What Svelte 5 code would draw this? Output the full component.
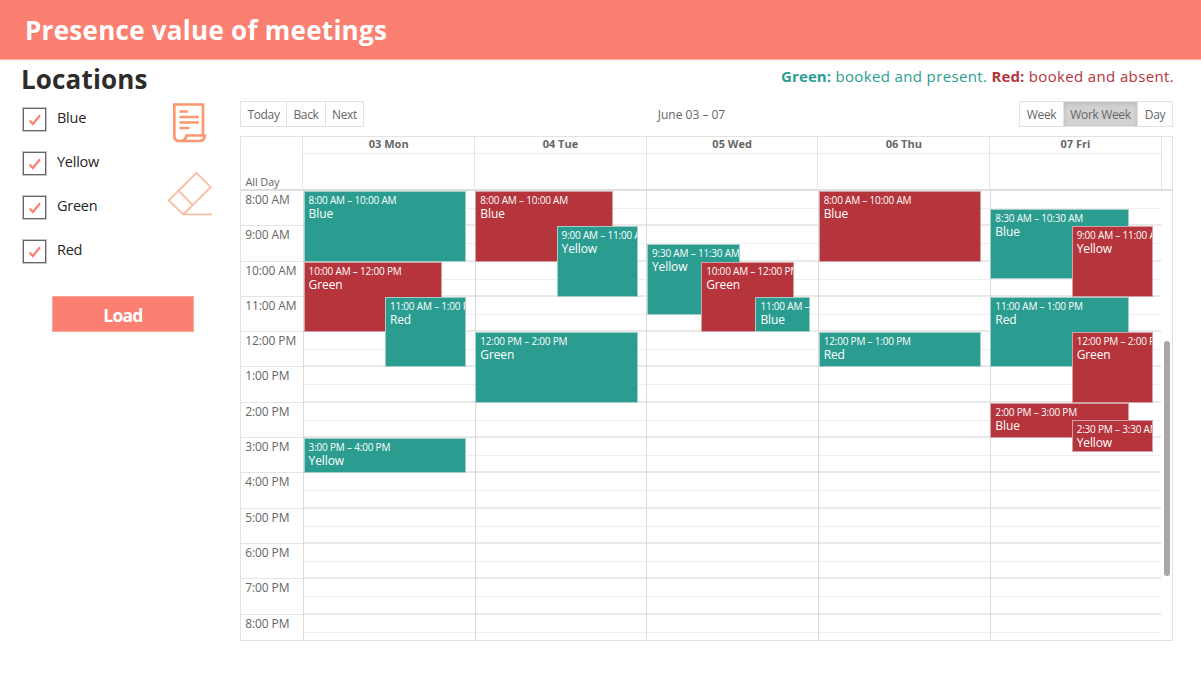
<script>
  const locations = ['Blue', 'Yellow', 'Green', 'Red'];
  const hours = ['8:00 AM', '9:00 AM', '10:00 AM', '11:00 AM', '12:00 PM', '1:00 PM', '2:00 PM', '3:00 PM', '4:00 PM', '5:00 PM', '6:00 PM', '7:00 PM', '8:00 PM'];
  const HOUR = 35.3;

  // from / to are hours of the day; left / width are shares of the event lane
  const e = (from, to, time, name, present, left = 0, width = 100) => ({ from, to, time, name, present, left, width });
  const days = [
    { label: '03 Mon', events: [
      e(8, 10, '8:00 AM – 10:00 AM', 'Blue', true),
      e(10, 12, '10:00 AM – 12:00 PM', 'Green', false, 0, 85),
      e(11, 13, '11:00 AM – 1:00 PM', 'Red', true, 50, 50),
      e(15, 16, '3:00 PM – 4:00 PM', 'Yellow', true)
    ] },
    { label: '04 Tue', events: [
      e(8, 10, '8:00 AM – 10:00 AM', 'Blue', false, 0, 85),
      e(9, 11, '9:00 AM – 11:00 AM', 'Yellow', true, 50, 50),
      e(12, 14, '12:00 PM – 2:00 PM', 'Green', true)
    ] },
    { label: '05 Wed', events: [
      e(9.5, 11.5, '9:30 AM – 11:30 AM', 'Yellow', true, 0, 57),
      e(10, 12, '10:00 AM – 12:00 PM', 'Green', false, 33.33, 57),
      e(11, 12, '11:00 AM – 12:00 PM', 'Blue', true, 66.67, 33.33)
    ] },
    { label: '06 Thu', events: [
      e(8, 10, '8:00 AM – 10:00 AM', 'Blue', false),
      e(12, 13, '12:00 PM – 1:00 PM', 'Red', true)
    ] },
    { label: '07 Fri', events: [
      e(8.5, 10.5, '8:30 AM – 10:30 AM', 'Blue', true, 0, 85),
      e(9, 11, '9:00 AM – 11:00 AM', 'Yellow', false, 50, 50),
      e(11, 13, '11:00 AM – 1:00 PM', 'Red', true, 0, 85),
      e(12, 14, '12:00 PM – 2:00 PM', 'Green', false, 50, 50),
      e(14, 15, '2:00 PM – 3:00 PM', 'Blue', false, 0, 85),
      e(14.5, 15.4, '2:30 PM – 3:30 AM', 'Yellow', false, 50, 50)
    ] }
  ];
</script>

<div class="page">
  <header><h1>Presence value of meetings</h1></header>
  <div class="body">
    <aside>
      <h2>Locations</h2>
      <div class="filters">
        <div class="checks">
          {#each locations as l}
            <div class="check">
              <span class="box"><svg width="14" height="14" viewBox="0 0 14 14"><path d="M1.6 7.6 4.9 11 12 2.2" /></svg></span>
              <span class="name">{l}</span>
            </div>
          {/each}
        </div>
        <div class="tools">
          <svg width="36" height="41" viewBox="0 0 36 41" fill="none" stroke="#fb986f" stroke-width="2.7">
            <path d="M32 32V1.500H3.300v31.500C3.300 36.500 5 38 8.500 38H28c4 0 5.500-2.300 5.800-5.500H15.300c0 3.500-2 5.500-6.500 5.500" />
            <path d="M8.500 8.500h8.500M8.500 14h19.500M8.500 19.500h19.500M8.500 25h10" />
          </svg>
          <svg class="eraser" width="46" height="46" viewBox="0 0 46 46" fill="none" stroke="#fbbda1" stroke-width="1.8">
            <path d="M1.700 29.500 29.500 1.800 43.700 16.200 16.300 43.400ZM11.700 19.800 25.600 34M15.500 43.400H45" />
          </svg>
        </div>
      </div>
      <button class="load">Load</button>
    </aside>
    <main>
      <p class="legend"><span class="green"><b>Green:</b> booked and present.</span> <span class="red"><b>Red:</b> booked and absent.</span></p>
      <div class="toolbar">
        <div class="group nav"><button>Today</button><button>Back</button><button>Next</button></div>
        <span class="range">June 03 – 07</span>
        <div class="group views"><button>Week</button><button class="active">Work Week</button><button>Day</button></div>
      </div>
      <div class="calendar">
        <div class="head">
          <div class="allday">All Day</div>
          {#each days as d}
            <div class="dayhead"><b>{d.label}</b></div>
          {/each}
        </div>
        <div class="grid">
          <div class="gutter">
            {#each hours as h}<div class="hour" style="height:{HOUR}px">{h}</div>{/each}
          </div>
          {#each days as d}
            <div class="day">
              {#each hours as h}<div class="slot" style="height:{HOUR}px"><i></i></div>{/each}
              <div class="lane">
                {#each d.events as ev}
                  <div class="event" class:absent={!ev.present} style="top:{(ev.from - 8) * HOUR}px;height:{(ev.to - ev.from) * HOUR}px;left:{ev.left}%;width:{ev.width}%">
                    <div class="time">{ev.time}</div>
                    <div class="title">{ev.name}</div>
                  </div>
                {/each}
              </div>
            </div>
          {/each}
          <div class="scroll"><div class="thumb"></div></div>
        </div>
      </div>
    </main>
  </div>
</div>

<style>
  :global(body) { background: #fff; }
  .page { width: 1201px; height: 673px; overflow: hidden; font-family: 'Open Sans', 'Noto Sans', sans-serif; color: #252423; }
  .page * { box-sizing: border-box; }
  header { height: 60px; background: #fb8072; border-bottom: 1px solid #fcb0a5; padding-left: 25px; }
  h1 { margin: 0; color: #fff; font-size: 26px; font-weight: 700; line-height: 60px; letter-spacing: 0.27px; white-space: nowrap; }
  .body { display: flex; }
  aside { width: 240px; padding-left: 22px; }
  h2 { margin: 0 0 0 -1px; color: #2d2c2b; font-size: 26px; line-height: 38px; font-weight: 700; letter-spacing: 0.15px; }
  .filters { display: flex; height: 198px; }
  .checks { width: 145px; padding-top: 9px; }
  .check { display: flex; height: 44.100px; gap: 10px; }
  .box { width: 25px; height: 25px; border: 1px solid #c8c6c4; outline: 1px solid #666; outline-offset: -2px; display: flex; align-items: center; justify-content: center; }
  .box path { fill: none; stroke: #fb8072; stroke-width: 2.200; }
  .name { font-size: 14.500px; line-height: 22.600px; letter-spacing: -0.25px; }
  .tools { padding-top: 5px; display: flex; flex-direction: column; gap: 27px; width: 48px; }
  .tools svg { display: block; margin-left: 4px; }
  .tools svg.eraser { margin-left: 0; }
  .load { display: block; margin-left: 30px; width: 142px; height: 36px; border: 1px solid #fca79c; background: #fb8072; color: #fff; font: 700 17.500px/34px 'Open Sans', sans-serif; letter-spacing: -0.75px; padding: 1px 0 0; }
  main { width: 934px; }
  .legend { margin: 0; height: 41px; line-height: 32px; font-size: 15px; letter-spacing: 0.36px; text-align: right; white-space: nowrap; }
  .legend b { letter-spacing: 0.1px; }
  .green { color: #2a9d90; }
  .red { color: #b6343b; }
  .toolbar { display: grid; grid-template-columns: 124px 1fr 154px; width: 933px; height: 26px; color: #666; font-size: 12px; letter-spacing: 0; }
  .range { line-height: 27px; text-align: center; }
  .group { display: grid; grid-template-rows: 24px; height: 26px; border: 1px solid #e2e2e2; }
  .nav { grid-template-columns: 45px 39px 38px; }
  .views { grid-template-columns: 43px 74px 35px; }
  .group button { border: 0; border-left: 1px solid #e2e2e2; background: #fff; color: #666; font: inherit; line-height: 23px; letter-spacing: -0.35px; padding: 0; white-space: nowrap; }
  .group button:first-child { border-left: 0; }
  .group .active { background: #d2d2d2; box-shadow: inset 0 2px 4px rgba(0, 0, 0, .12); }
  .calendar { margin-top: 9px; width: 933px; height: 505px; border: 1px solid #e2e2e2; color: #666; display: flex; flex-direction: column; overflow: hidden; }
  .head { display: flex; height: 54px; border-bottom: 2px solid #dedede; flex: none; }
  .allday { width: 62.400px; flex: none; border-right: 1px solid #e4e4e4; display: flex; align-items: flex-end; padding-left: 4.500px; font-size: 11px; line-height: 15px; letter-spacing: -0.15px; }
  .dayhead { width: 171.700px; flex: none; border-right: 1px solid #e4e4e4; text-align: center; font-size: 11px; }
  .dayhead b { display: block; height: 17px; line-height: 13px; border-bottom: 1px solid #ececec; }
  .grid { display: flex; height: 449px; overflow: hidden; flex: none; }
  .gutter { width: 62px; flex: none; }
  .hour { border-bottom: 1px solid #e4e4e4; padding-left: 4.300px; font-size: 12px; line-height: 18.600px; letter-spacing: -0.12px; white-space: nowrap; }
  .day { width: 171.700px; flex: none; position: relative; border-left: 1px solid #dadada; }
  .slot { border-bottom: 2px solid #e9e9e9; }
  .slot i { display: block; height: 18px; border-bottom: 1px solid #eee; }
  .lane { position: absolute; top: 0; bottom: 0; left: -0.400px; right: 8.500px; }
  .event { position: absolute; overflow: hidden; background: #2a9d90; border: 1px solid #a2cdc8; color: #fff; padding: 1px 4px; white-space: nowrap; }
  .absent { background: #b6343b; border-color: #d3a0a3; }
  .time { font-size: 10px; line-height: 14px; letter-spacing: -0.2px; }
  .title { font-size: 12px; line-height: 13px; letter-spacing: -0.1px; }
  .scroll { flex: 1; padding: 150px 0 0 3px; }
  .thumb { width: 6px; height: 235px; border-radius: 3px; background: #a8a8a8; }
</style>
